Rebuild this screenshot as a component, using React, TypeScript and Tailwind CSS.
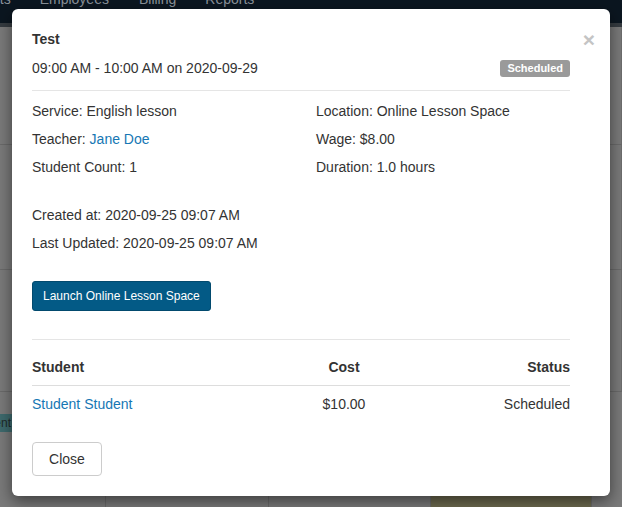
import React from 'react';

const rows = [
  { h: 'h-[118px]', cells: ['', '', '', '', ''] },
  { h: 'h-[125px]', cells: ['', '', '', '', ''] },
  { h: 'h-[122px]', cells: ['', '', '', '', ''] },
];

function Backdrop() {
  return (
    <div className="absolute inset-0 flex flex-col bg-[#7a7a7a]">
      <div className="h-[23px] bg-[#0b1620] overflow-hidden flex text-[14px] leading-[14px] text-[#8a929a]">
        <span className="-mt-[8px] -ml-[8px]">nts</span>
        <span className="-mt-[8px] ml-[29px]">Employees</span>
        <span className="-mt-[8px] ml-[30px]">Billing</span>
        <span className="-mt-[8px] ml-[29px]">Reports</span>
      </div>
      <div className="h-[4px] bg-[#353b40]" />
      {rows.map((r, i) => (
        <div key={i} className={`${r.h} grid grid-cols-[106px_163px_162px_161px_1fr] border-b border-[#6a6a6a]`}>
          {r.cells.map((_, j) => (
            <div key={j} className="border-r border-[#6e6e6e]" />
          ))}
        </div>
      ))}
      <div className="flex-1 grid grid-cols-[106px_163px_162px_161px_1fr]">
        <div className="border-r border-[#6a6a6a] pt-[22px]">
          <div className="h-[18px] w-[60px] -ml-[48px] bg-[#3e6a6d] text-[12px] leading-[18px] text-[#1f2a2a] text-right pr-[1px]">
            Student
          </div>
        </div>
        <div className="border-r border-[#6a6a6a]" />
        <div className="border-r border-[#6a6a6a]" />
        <div className="border-r border-[#6a6a6a] bg-[#6d6a4f]" />
        <div />
      </div>
    </div>
  );
}

export default function App() {
  return (
    <div
      className="relative w-[622px] h-[507px] overflow-hidden text-[14px] leading-[20px] text-[#333]"
      style={{ fontFamily: '"Liberation Sans", Arial, Helvetica, sans-serif' }}
    >
      <Backdrop />

      <div className="absolute left-[12px] top-[9px] w-[598px] bg-white rounded-[6px] shadow-[0_5px_15px_rgba(0,0,0,0.5)] pl-5 pr-10 pt-5 pb-5">
        <button className="absolute right-[15px] top-[20px] text-[21px] leading-[21px] font-bold text-[#c4c4c4]">
          ×
        </button>

        <h4 className="font-bold">Test</h4>
        <div className="mt-[9px] flex items-center justify-between">
          <span>09:00 AM - 10:00 AM on 2020-09-29</span>
          <span className="h-[17px] px-[7px] rounded-[3px] bg-[#9a9a9a] text-white text-[11px] leading-[17px] font-bold">
            Scheduled
          </span>
        </div>

        <div className="mt-[12px] border-t border-[#e5e5e5]" />

        <div className="mt-[10px] grid grid-cols-[284px_1fr] gap-y-2">
          <div>Service: English lesson</div>
          <div>Location: Online Lesson Space</div>
          <div>
            Teacher: <a className="text-[#1677b4]">Jane Doe</a>
          </div>
          <div>Wage: $8.00</div>
          <div>Student Count: 1</div>
          <div>Duration: 1.0 hours</div>
        </div>

        <div className="mt-[28px] flex flex-col gap-2">
          <div>Created at: 2020-09-25 09:07 AM</div>
          <div>Last Updated: 2020-09-25 09:07 AM</div>
        </div>

        <button className="mt-[28px] h-[30px] px-[10px] rounded-[3px] bg-[#035a86] border border-[#024a6e] text-white text-[12px] leading-[16px]">
          Launch Online Lesson Space
        </button>

        <div className="mt-[28px] border-t border-[#e5e5e5]" />

        <div className="mt-[9px] mb-[20px]">
          <div className="grid grid-cols-[270px_84px_1fr] border-b border-[#dddddd] py-[8px] font-bold">
            <div>Student</div>
            <div className="text-center">Cost</div>
            <div className="text-right">Status</div>
          </div>
          <div className="grid grid-cols-[270px_84px_1fr] py-[8px]">
            <a className="text-[#1677b4]">Student Student</a>
            <div className="text-center">$10.00</div>
            <div className="text-right">Scheduled</div>
          </div>
        </div>

        <button className="h-[34px] w-[70px] rounded-[4px] border border-[#cccccc] bg-white text-[14px]">
          Close
        </button>
      </div>
    </div>
  );
}
